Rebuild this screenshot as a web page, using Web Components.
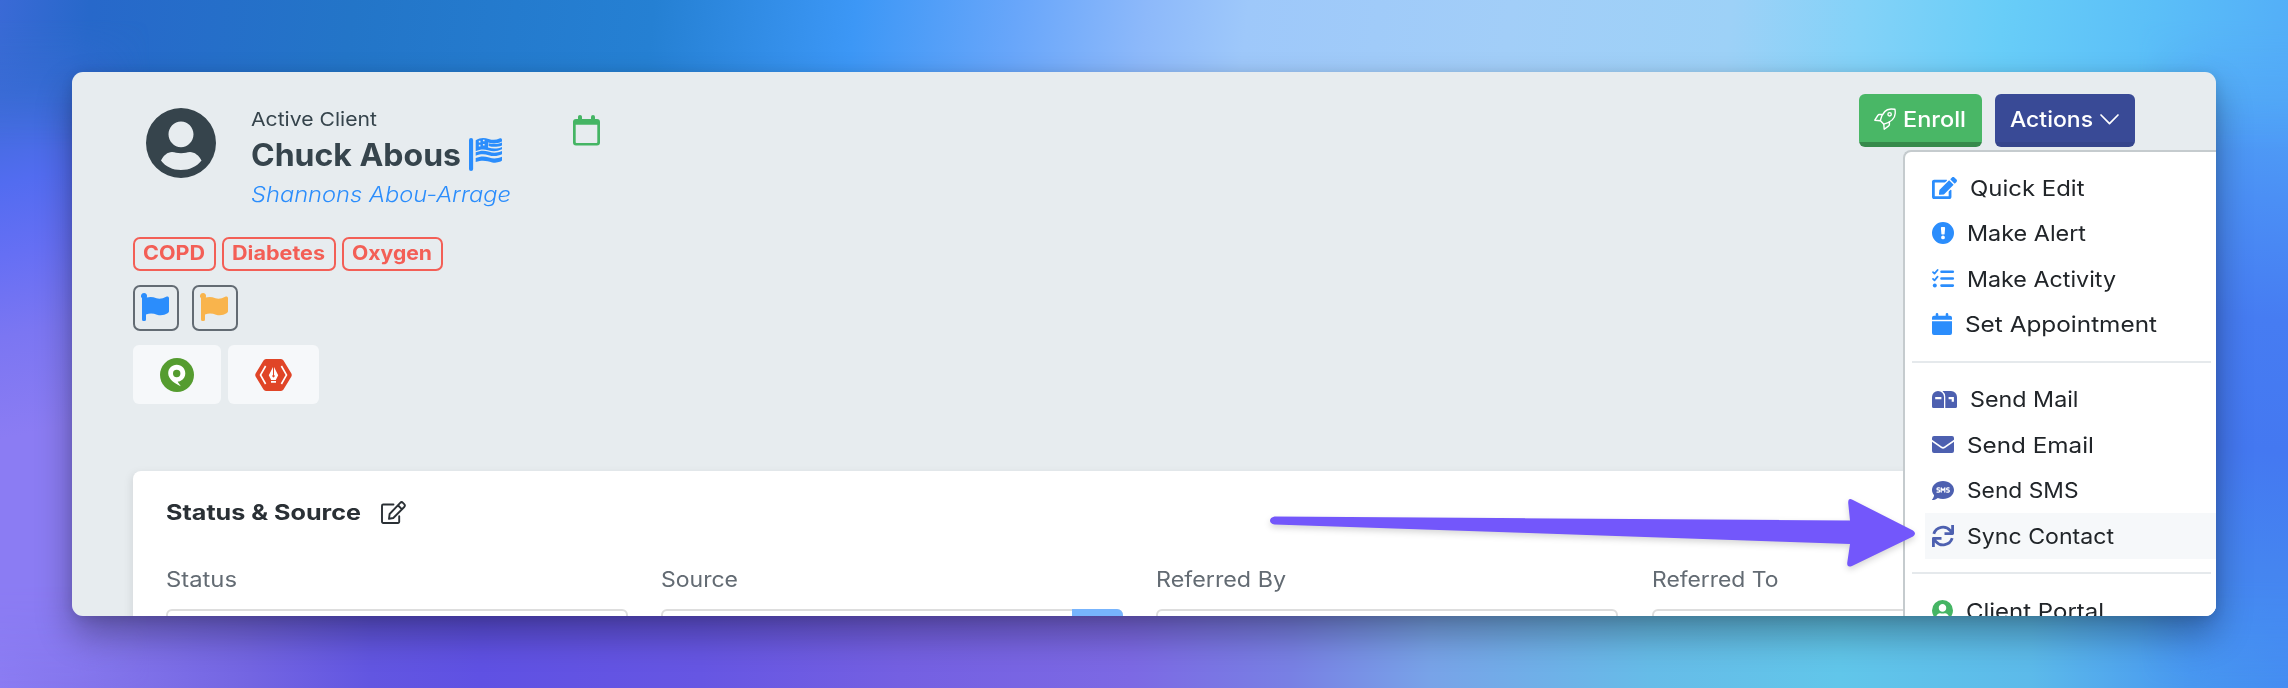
<!DOCTYPE html>
<html lang="en">
<head>
<meta charset="utf-8">
<title>Client profile</title>
<style>
html,body{margin:0;padding:0}
body{width:2288px;height:688px;overflow:hidden;font-family:Inter,"Liberation Sans",sans-serif;color:#212529}
</style>
</head>
<body>
<app-backdrop>
  <client-window></client-window>
</app-backdrop>
<script>
function define(name, html, after){
  const t=document.createElement('template');
  t.innerHTML=html;
  customElements.define(name, class extends HTMLElement{
    connectedCallback(){
      if(!this.shadowRoot){
        this.attachShadow({mode:'open'}).appendChild(t.content.cloneNode(true));
      }
      if(after) after(this,this.shadowRoot);
    }
  });
}

/* Text run whose width is set by the "w" attribute */
define('fit-text',`<style>
:host{display:block;flex:none;line-height:30px;height:30px;white-space:nowrap}
span{display:inline-block;transform-origin:0 50%}
</style><span><slot></slot></span>`,(el,root)=>{
  const w=parseFloat(el.getAttribute('w'));
  el.style.width=w+'px';
  const s=root.querySelector('span');
  s.style.transform='none';
  const n=s.getBoundingClientRect().width;
  if(n) s.style.transform='scaleX('+(w/n)+')';
});

const USER='<path fill-rule="evenodd" d="M35 0a35 35 0 1 0 0 70a35 35 0 1 0 0-70ZM35 13.4c6.900 0 12.500 5.800 12.500 12.900S41.900 39.200 35 39.200S22.500 33.400 22.500 26.300S28.100 13.400 35 13.400ZM15 52.500C17.500 47.500 21.500 44 26 44C29 44 31 45.300 35 45.300S41 44 44 44C48.500 44 53 47.500 55.500 52.500C50.500 58.800 43.500 62 35 62S19.800 58.800 15 52.500Z"/>';
const FLAG='<path d="M3 0a3 3 0 0 1 3 3.600l-.2 1C9 3.500 12 4 15.500 5.200c3.500 1.100 6.500 0 9.700-1.500c1.500-.7 2.800 0 2.800 1.500V18c0 1-.5 1.700-1.400 2.200c-3 1.800-6.500 2.600-10.600 1.500C12.500 20.600 9 20 5 21.600V26.500a1.500 1.500 0 0 1-1.500 1.500h-1A1.500 1.500 0 0 1 1 26.500V5.300A3 3 0 0 1 3 0Z"/>';
const ICONS={
 user:['0 0 70 70',USER],
 flag:['0 0 28 28',FLAG],
 usflag:['0 0 32 33','<rect x="0" y="0" width="4" height="33" rx="2"/><path fill-rule="evenodd" d="M6.500 2.200C11-.8 15-.5 19 .9c4 1.300 7 1.300 10.500-.4c1.300-.6 2.500 0 2.500 1.300V3.600C27 6 23 6 18.500 4.600V9.500C23 11 27.500 11 32 8.900V11.300c-5 2.400-9 2.300-13.500 1C14 11 10.500 11.400 6.500 13.300ZM9.500 2.800v1.600h1.600V2.800ZM13.500 1.700v1.600h1.600V1.700ZM9.500 6.800v1.600h1.600V6.800ZM13.500 6v1.600h1.600V6Z"/><path d="M19 5.200c4.800 1.400 8.500 1.100 13-.8v3C27 9.300 23 9.200 19 7.900ZM6.500 14.300c5-2.200 8.500-2 13-.5c4.500 1.400 8 1 12.500-.8v3.300c-4.500 2.100-8.500 2.200-13 .9c-4.300-1.300-8-1.200-12.500.6ZM6.500 20.100c5-2.200 8.500-2 13-.5c4.500 1.400 8 1 12.500-.8v3.500c-.3 1.200-4.500 3-9.500 2.100c-5-1-8.500-2.900-16-.3Z"/>'],
 calo:['0 0 27 31','<path fill-rule="evenodd" d="M7 0c1.200 0 2 .8 2 2v2h9V2a2 2 0 0 1 4 0v2h2a3 3 0 0 1 3 3v20.500a3 3 0 0 1-3 3H3a3 3 0 0 1-3-3V7a3 3 0 0 1 3-3h2V2c0-1.200.8-2 2-2ZM2.700 9.700V27.200a.7.7 0 0 0 .7.700H23.600a.7.7 0 0 0 .7-.7V9.700Z"/>'],
 cal:['0 0 20 22','<path d="M5 0a1.300 1.300 0 0 1 1.300 1.300V2.800h7.400V1.300a1.300 1.300 0 0 1 2.600 0V2.800H18a2 2 0 0 1 2 2V6.700H0V4.800a2 2 0 0 1 2-2h1.700V1.300A1.300 1.300 0 0 1 5 0ZM0 8.200H20V20a2 2 0 0 1-2 2H2a2 2 0 0 1-2-2Z"/>'],
 edit:['0 0 576 512','<path d="M402.6 83.2l90.2 90.2c3.800 3.800 3.800 10 0 13.800L274.400 405.600l-92.800 10.300c-12.400 1.400-22.900-9.100-21.500-21.500l10.300-92.800L388.800 83.200c3.800-3.800 10-3.800 13.800 0zm162-22.900l-48.800-48.800c-15.200-15.200-39.900-15.200-55.200 0l-35.400 35.400c-3.800 3.800-3.800 10 0 13.800l90.200 90.200c3.800 3.800 10 3.800 13.800 0l35.400-35.400c15.200-15.300 15.200-40 0-55.200zM384 346.200V448H64V128h229.800c3.200 0 6.200-1.300 8.500-3.500l40-40c7.600-7.600 2.200-20.500-8.500-20.500H48C21.500 64 0 85.500 0 112v352c0 26.500 21.500 48 48 48h352c26.500 0 48-21.500 48-48V306.200c0-10.700-12.900-16-20.500-8.500l-40 40c-2.200 2.300-3.500 5.300-3.500 8.500z"/>'],
 edito:['0 0 25 22','<g fill="none" stroke="currentColor" stroke-width="1.900" stroke-linejoin="round" stroke-linecap="round"><path d="M12.500 3.400H2.200a1.200 1.200 0 0 0-1.200 1.200V19.800a1.200 1.200 0 0 0 1.200 1.200H17a1.200 1.200 0 0 0 1.200-1.200V14.500"/><path d="M19.200 1.800a2 2 0 0 1 2.800 0l1.200 1.200a2 2 0 0 1 0 2.800L12.300 16.300L8 17l.6-4.500ZM17 4l4 4"/></g>'],
 alert:['0 0 22 22','<path fill-rule="evenodd" d="M11 0a11 11 0 1 0 0 22a11 11 0 1 0 0-22ZM9.700 5h2.600a.8.8 0 0 1 .8.900l-.5 6a.8.800 0 0 1-.8.700h-1.600a.8.8 0 0 1-.8-.7l-.5-6a.8.8 0 0 1 .8-.9ZM11 13.500a1.900 1.900 0 1 1 0 3.800a1.900 1.900 0 1 1 0-3.800Z"/>'],
 tasks:['0 0 22 19','<g fill="none" stroke="currentColor" stroke-linecap="round" stroke-linejoin="round"><path stroke-width="2.600" d="M9.500 2.700H20.800M9.500 9.500H20.800M9.500 16.600H20.800"/><path stroke-width="1.800" d="M1 3.200L2.500 4.600L5.600 1M1 9.900l1.500 1.400L5.600 7.700"/></g><circle cx="2.800" cy="16.600" r="2"/>'],
 mail:['0 0 25 17','<path fill-rule="evenodd" d="M6 0a6 6 0 0 1 6 6V17H1.500A1.500 1.500 0 0 1 0 15.500V6A6 6 0 0 1 6 0ZM3.200 6.100V8.300H9.400V6.100ZM10.500 0H19a6 6 0 0 1 6 6V15.500A1.500 1.500 0 0 1 23.500 17H13.300V6A7.500 7.500 0 0 0 10.500 0ZM16.600 6.100V8.300H19.700V10.800H21.900V6.100Z"/>'],
 email:['0 0 22 17','<path d="M2 0H20a2 2 0 0 1 2 2V3.800L12.300 10.600a2.200 2.200 0 0 1-2.600 0L0 3.800V2A2 2 0 0 1 2 0ZM0 5.700L9 12a3.500 3.500 0 0 0 4 0L22 5.700V15a2 2 0 0 1-2 2H2a2 2 0 0 1-2-2Z"/>'],
 sms:['0 0 22 19','<path d="M11 0C17.100 0 22 4 22 9s-4.900 9-11 9c-1.900 0-3.700-.4-5.200-1.100C4.500 17.900 2.400 19 .4 19c-.4 0-.5-.4-.2-.7C1.300 17.100 2 15.600 2.100 14.200C.8 12.700 0 11 0 9c0-5 4.900-9 11-9Z"/><g fill="none" stroke="#fff" stroke-width="1.300" stroke-linecap="round" stroke-linejoin="round"><path d="M7.400 6.900H6a1 1 0 0 0 0 2h.6a1 1 0 0 1 0 2.200H5M9.200 11V6.900l1.800 2.500l1.800-2.500V11M17 6.900H15.600a1 1 0 0 0 0 2h.6a1 1 0 0 1 0 2.200H14.700"/></g>'],
 sync:['0 0 22 22','<g fill="none" stroke="currentColor" stroke-width="2.800" stroke-linejoin="round"><path d="M1.800 8.800A9.500 9.500 0 0 1 18.300 5.700L20.300 8.300M20.600 0V8.600H12.500M20.200 13.200A9.500 9.500 0 0 1 3.700 16.300L1.700 13.700M1.400 22V13.400H9.500"/></g>'],
 rocket:['0 0 22 22','<g fill="none" stroke="currentColor" stroke-width="1.400" stroke-linejoin="round" stroke-linecap="round"><path d="M6.300 12.500C7.500 7.500 10.500 1 17 1c1.700 0 3 .1 3.900.3c.4 1.200.4 2.600.3 4.200C20.900 11.500 15 14.700 9.800 16.200Z"/><path d="M7.900 6.500H5.400a1.800 1.800 0 0 0-1.600 1L.8 12.200l5.400.5M15.400 13.800V16.500a1.800 1.800 0 0 1-1 1.600L10.200 21.200l-.4-4.900"/><circle cx="15.600" cy="6.300" r="1.700"/></g>'],
 chevron:['0 0 19 11','<path d="M1 1L9.500 9.600L18 1" fill="none" stroke="currentColor" stroke-width="1.700" stroke-linecap="round" stroke-linejoin="round"/>'],
 phab:['0 0 34 34','<circle cx="17" cy="17" r="17"/><path fill="#fff" fill-rule="evenodd" d="M16.700 6.800c5 0 8.600 3.700 8.600 8.600c0 3.200-1.700 5.800-4.600 7.300c-1.500.8-2.700 1-3 .9c.4 1.400 1.700 2.400 3.100 4.700C15.500 26 8.200 21.500 8.200 15.300C8.200 10.400 11.800 6.800 16.700 6.800ZM16.700 11.800a3.700 3.700 0 1 0 0 7.400a3.700 3.700 0 1 0 0-7.400Z"/>'],
 hexpen:['0 0 37 32','<path d="M11 0H26a3 3 0 0 1 2.500 1.500L36.400 14.500a3 3 0 0 1 0 3L28.500 30.500A3 3 0 0 1 26 32H11a3 3 0 0 1-2.500-1.500L.6 17.500a3 3 0 0 1 0-3L8.500 1.500A3 3 0 0 1 11 0Z"/><path d="M10.600 7L5.500 16L10.600 25M26.400 7L31.500 16L26.400 25" fill="none" stroke="#fff" stroke-width="1.600"/><path fill="#fff" d="M18 8L13.800 16.200L16.200 21H20.800L23.200 16.200L19 8V16a1.200 1.200 0 1 1-1 0ZM16 22H21V23.700H16Z"/>'],
};
/* Icon: name, w, h */
customElements.define('ui-icon',class extends HTMLElement{
  connectedCallback(){
    if(this.shadowRoot) return;
    const [vb,body]=ICONS[this.getAttribute('name')];
    const w=this.getAttribute('w'),h=this.getAttribute('h');
    this.attachShadow({mode:'open'}).innerHTML=`<style>:host{display:block;flex:none;width:${w}px;height:${h}px}svg{display:block;width:100%;height:100%;fill:currentColor;overflow:visible}</style><svg viewBox="${vb}" preserveAspectRatio="none">${body}</svg>`;
  }
});

/* Colour wash behind the window */
define('app-backdrop',`<style>
:host{display:block;box-sizing:border-box;position:relative;width:2288px;height:688px;padding:72px;overflow:hidden;background:#5577e8}
.l{position:absolute;inset:0}
.bottom{background:linear-gradient(90deg,#8b7cf3 0,#8173ea 120px,#7365e2 250px,#6256e1 370px,#5f51e3 480px,#6656e3 700px,#7460e2 900px,#7c69e4 1130px,#7880e4 1290px,#78a3e8 1430px,#66bce8 1650px,#61c6ea 1840px,#5cbaea 2030px,#4898f0 2190px,#458df2 2288px)}
.top{background:linear-gradient(97deg,#3a6ad6 0,#2768ca 90px,#2375c8 350px,#2580d3 650px,#3c97f6 850px,#68a6fa 1010px,#8db9fa 1140px,#9ec8fa 1240px,#a2cef8 1500px,#9dd1f7 1720px,#83d2f8 1850px,#68cdf8 1990px,#5bbff8 2140px,#50a8f8 2330px);
mask-image:linear-gradient(#000 0,#000 100px,transparent 560px)}
.left{right:auto;width:150px;background:linear-gradient(168deg,#3170cc 0,#3c6cd6 90px,#526cf0 180px,#656ff4 250px,#7b76f2 330px,#8b7cf3 430px,#8b7cf3 800px);
mask-image:linear-gradient(90deg,#000 0,#000 72px,transparent 100%),linear-gradient(transparent 20px,#000 150px,#000 580px,transparent 100%);mask-composite:intersect}
.right{left:auto;width:150px;background:linear-gradient(186deg,#56aefa 0,#50a2f6 100px,#4b8ff5 200px,#467cf2 320px,#4478f1 450px,#4585f0 570px,#458df2 688px);
mask-image:linear-gradient(270deg,#000 0,#000 72px,transparent 100%),linear-gradient(transparent 20px,#000 150px,#000 580px,transparent 100%);mask-composite:intersect}
::slotted(*){position:relative}
</style><div class="l bottom"></div><div class="l top"></div><div class="l left"></div><div class="l right"></div><slot></slot>`);

define('tag-pill',`<style>
:host{display:flex;box-sizing:border-box;height:34px;border:2px solid #f35f56;border-radius:7px;padding:0 9px 0 8px;align-items:center;color:#f35f56;font-size:20px;font-weight:700}
div{margin-top:-3px}
</style><div><slot></slot></div>`);

define('flag-box',`<style>
:host{display:flex;box-sizing:border-box;width:46px;height:46px;border:2px solid #636b73;border-radius:7px;padding:5.500px 0 0 6px}
</style><slot></slot>`);

define('app-tile',`<style>
:host{display:flex;box-sizing:border-box;height:59px;background:#f6f8fa;border-radius:6px;align-items:center;justify-content:center}
</style><slot></slot>`);

define('ui-button',`<style>
:host{display:flex;box-sizing:border-box;height:53px;border-radius:6px;color:#fff;font-size:22px;font-weight:500;align-items:center;padding:0 0 3px 15px;background:var(--bg)}
</style><slot></slot>`);

define('profile-header',`<style>
:host{display:flex;justify-content:space-between;height:165px;padding:0 81px 0 74px;color:#36444c}
.who{display:flex}
.av{margin:36px 35px 0 0}
.names{width:321.500px;padding-top:32px}
.role{font-size:19.300px;height:30px}
.name{display:flex;align-items:center;height:42px;font-size:31px;font-weight:700;gap:8px}
.name ui-icon{color:#2b8dfc;margin-top:-2px}
.owner{height:36px;display:flex;align-items:center;font-size:21.300px;font-weight:300;font-style:italic;color:#2b8dfc}
.cal{margin-top:43px;color:#45b564}
.btns{display:flex;gap:13px;padding-top:22px}
.enroll{width:123px;--bg:linear-gradient(#49b766 48px,#368a4b 48px)}
.actions{width:140px;--bg:linear-gradient(#394a96 48px,#35458c 48px)}
.enroll ui-icon{margin-right:7px}.actions ui-icon{margin:0 0 0 7px}
</style>
<div class="who"><ui-icon class="av" name="user" w="70" h="70"></ui-icon>
<div class="names"><div class="role"><fit-text w="126">Active Client</fit-text></div>
<div class="name"><fit-text w="210">Chuck Abous</fit-text><ui-icon name="usflag" w="33" h="33"></ui-icon></div>
<div class="owner"><fit-text w="260">Shannons Abou-Arrage</fit-text></div></div>
<ui-icon class="cal" name="calo" w="27" h="31"></ui-icon></div>
<div class="btns"><ui-button class="enroll"><ui-icon name="rocket" w="22" h="22"></ui-icon><fit-text w="63">Enroll</fit-text></ui-button>
<ui-button class="actions"><fit-text w="83">Actions</fit-text><ui-icon name="chevron" w="19" h="11"></ui-icon></ui-button></div>`);

define('form-field',`<style>
:host{display:block;width:462px;font-size:21.300px;color:#636b73}
.box{box-sizing:border-box;height:44px;margin-top:15px;border:2px solid #ddd;border-radius:6px;background:#fff;display:flex;justify-content:flex-end}
.add{display:none;width:51px;background:#77b4fd;margin:-2px;border-radius:0 6px 6px 0}
:host([addon]) .add{display:block}
</style><slot></slot><div class="box"><div class="add"></div></div>`);

define('status-panel',`<style>
:host{display:block;box-sizing:border-box;background:#fff;border-radius:8px 0 0 0;height:200px;padding:26px 0 0 33px;box-shadow:-2px 2px 8px rgba(0,0,0,.08)}
.title{display:flex;align-items:center;font-size:21.300px;font-weight:700;color:#2a3035;gap:20px}
.fields{display:grid;grid-template-columns:repeat(4,462px);gap:33.200px;margin-top:37px}
</style>
<div class="title"><fit-text w="195">Status &amp; Source</fit-text><ui-icon name="edito" w="25" h="23"></ui-icon></div>
<div class="fields"><form-field><fit-text w="71">Status</fit-text></form-field><form-field addon><fit-text w="77">Source</fit-text></form-field><form-field><fit-text w="130">Referred By</fit-text></form-field><form-field><fit-text w="126.500">Referred To</fit-text></form-field></div>`);

define('menu-item',`<style>
:host{display:flex;box-sizing:border-box;height:45.500px;margin-left:19.500px;padding-left:7px;align-items:center;font-size:21.700px;color:#212529}
:host([active]){background:#f6f8fa}
.i{margin-right:13px;color:var(--c,#2b8dfc)}
</style><div class="i"><slot name="icon"></slot></div><slot></slot>`);

define('action-menu',`<style>
:host{display:block;box-sizing:border-box;width:313px;background:#fff;border:2px solid #c5cbce;border-right:0;border-radius:8px 0 0 0;height:560px;padding-top:13.500px}
hr{border:0;height:2px;background:#e5e9ec;margin:13.500px 5px 14px 7px}
.v{--c:#4d60b0}.g{--c:#45b564}
</style>
<menu-item><ui-icon slot="icon" name="edit" w="25" h="22"></ui-icon><fit-text w="114.500">Quick Edit</fit-text></menu-item>
<menu-item><ui-icon slot="icon" name="alert" w="22" h="22"></ui-icon><fit-text w="119">Make Alert</fit-text></menu-item>
<menu-item><ui-icon slot="icon" name="tasks" w="22" h="19"></ui-icon><fit-text w="149">Make Activity</fit-text></menu-item>
<menu-item><ui-icon slot="icon" name="cal" w="20" h="22"></ui-icon><fit-text w="192">Set Appointment</fit-text></menu-item>
<hr>
<menu-item class="v"><ui-icon slot="icon" name="mail" w="25" h="17"></ui-icon><fit-text w="108.500">Send Mail</fit-text></menu-item>
<menu-item class="v"><ui-icon slot="icon" name="email" w="22" h="17"></ui-icon><fit-text w="127">Send Email</fit-text></menu-item>
<menu-item class="v"><ui-icon slot="icon" name="sms" w="22" h="19"></ui-icon><fit-text w="111.500">Send SMS</fit-text></menu-item>
<menu-item class="v" active><ui-icon slot="icon" name="sync" w="22" h="22"></ui-icon><fit-text w="147">Sync Contact</fit-text></menu-item>
<hr>
<menu-item class="g"><ui-icon slot="icon" name="user" w="21" h="21"></ui-icon><fit-text w="138">Client Portal</fit-text></menu-item>`);

define('pointer-arrow',`<style>:host{display:block;width:650px;height:76px}svg{display:block;overflow:visible;filter:drop-shadow(0 3px 3px rgba(0,0,0,.16))}</style>
<svg width="650" height="76" viewBox="0 0 650 76"><path fill="#7357fb" d="M4.500 18.500L580 22.500L578.200 5Q578 -.5 582.500 1.800L643 32.500Q647 35.500 643 38.500L582 68Q577 70 577.200 65L580 46L4.500 26.500Q0 25.500 0 22.500T4.500 18.500Z"/></svg>`);

define('client-window',`<style>
:host{display:block;box-sizing:border-box;width:2144px;height:544px;border-radius:11px;box-shadow:0 18px 36px rgba(0,0,0,.33),0 2px 12px rgba(0,0,0,.1)}
.clip{position:relative;height:100%;overflow:hidden;border-radius:inherit;background:#e7ecef}
.row{display:flex;margin-left:61px}
.tags{gap:6px}
.flags{gap:13px;margin-top:14px}
.tiles{gap:7px;margin-top:14px}
status-panel{margin:67px 0 0 61px}
action-menu{position:absolute;left:1831px;top:77.500px}
pointer-arrow{position:absolute;left:1198px;top:425.500px}
</style>
<div class="clip">
<profile-header></profile-header>
<div class="row tags"><tag-pill><fit-text w="62">COPD</fit-text></tag-pill><tag-pill><fit-text w="93">Diabetes</fit-text></tag-pill><tag-pill><fit-text w="80">Oxygen</fit-text></tag-pill></div>
<div class="row flags"><flag-box><ui-icon name="flag" w="28" h="28" style="color:#2b8dfc"></ui-icon></flag-box><flag-box><ui-icon name="flag" w="28" h="28" style="color:#f9b44c"></ui-icon></flag-box></div>
<div class="row tiles"><app-tile style="width:88px"><ui-icon name="phab" w="34" h="34" style="color:#559c2f"></ui-icon></app-tile><app-tile style="width:91px"><ui-icon name="hexpen" w="37" h="32" style="color:#e04527"></ui-icon></app-tile></div>
<status-panel></status-panel>
<action-menu></action-menu>
<pointer-arrow></pointer-arrow>
</div>`);
</script>
</body>
</html>
